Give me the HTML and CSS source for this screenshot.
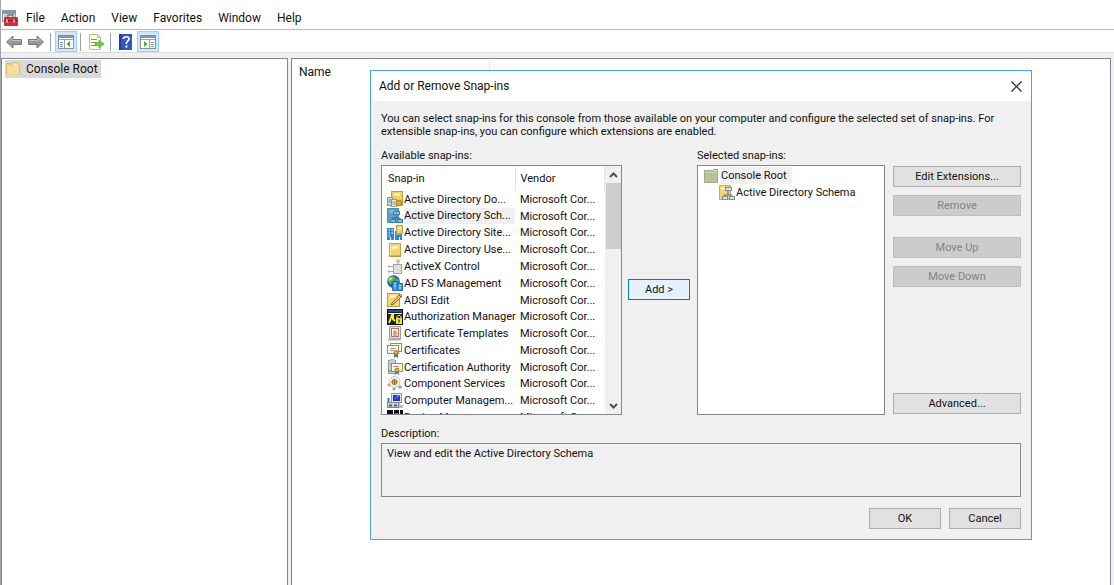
FILE: index.html
```html
<!DOCTYPE html>
<html lang="en">
<head>
    <meta charset="UTF-8">
    <meta name="viewport" content="width=device-width, initial-scale=1.0">
    <title>Console Root</title>
    <link rel="stylesheet" href="styles.css">
</head>
<body>
    <div class="console">
        <nav class="menubar">
            <svg class="icon" viewBox="0 0 16 16">
                <rect x="0.5" y="0.5" width="13" height="11" fill="#e4e8ee" stroke="#8b95a5"/>
                <rect x="1" y="1" width="12" height="3" fill="#8797b0"/>
                <path d="M2 6h4M2 8h3" stroke="#9aa5b5"/>
                <path d="M6 7V5h5v2" fill="none" stroke="#777" stroke-width="1.4"/>
                <rect x="2" y="7" width="14" height="9" rx="1" fill="#cf3035"/>
                <path d="M2 10.5h14" stroke="#8d1a1e"/>
                <path d="M5 9.500v3M12 9.500v3" stroke="#f3c7c7" stroke-width="1.5"/>
            </svg>
            <button class="menu">File</button>
            <button class="menu">Action</button>
            <button class="menu">View</button>
            <button class="menu">Favorites</button>
            <button class="menu">Window</button>
            <button class="menu">Help</button>
        </nav>

        <div class="toolbar">
            <button class="tool" aria-label="Back">
                <svg class="icon" viewBox="0 0 16 16"><path d="M.5 8l6.500-6v3.500h8.500v5H7V14z" fill="#999" stroke="#777"/><path d="M3 7.500l3-3v2h8.500" fill="none" stroke="#c4c4c4"/></svg>
            </button>
            <button class="tool" aria-label="Forward">
                <svg class="icon" viewBox="0 0 16 16"><path d="M15.500 8L9 2v3.500H.5v5H9V14z" fill="#999" stroke="#777"/><path d="M13 7.500l-3-3v2H1.500" fill="none" stroke="#c4c4c4"/></svg>
            </button>
            <span class="separator"></span>
            <button class="tool active" aria-label="Show console tree">
                <svg class="icon" viewBox="0 0 16 16">
                    <rect x="0.5" y="1.5" width="15" height="13" fill="#fff" stroke="#8b9199"/>
                    <path d="M1 3h14" stroke="#8b95a2" stroke-width="2"/>
                    <path d="M1 5.500h14M6.500 6v8" stroke="#9aa0a8"/>
                    <path d="M2 8.500h3M2 10.500h3M2 12.500h3" stroke="#7b98bd"/>
                    <path d="M12 7v6L8.500 10z" fill="#3db51c"/>
                </svg>
            </button>
            <span class="separator"></span>
            <button class="tool" aria-label="Export list">
                <svg class="icon" viewBox="0 0 16 16">
                    <path d="M1.500.5h8l3 3v12h-11z" fill="#fffbe0" stroke="#bdb9a0"/>
                    <path d="M9.500.5v3h3" fill="none" stroke="#bdb9a0"/>
                    <path d="M3 5.500h6M3 8.500h5M3 11.500h6" stroke="#8f8d82"/>
                    <path d="M7 8.500h4V6l5 4-5 4v-2.500H7z" fill="#5fd442" stroke="#48ad30" stroke-width=".6"/>
                </svg>
            </button>
            <span class="separator"></span>
            <button class="tool" aria-label="Help">
                <svg class="icon" viewBox="0 0 16 16">
                    <rect x="1" y="0" width="13" height="16" fill="#3157bd"/>
                    <path d="M2 0v16" stroke="#1f3c92" stroke-width="2"/>
                    <path d="M5.500 5c0-3 5.500-3 5.500 0 0 2-2.700 2-2.700 5" fill="none" stroke="#fff" stroke-width="1.700"/>
                    <rect x="7.400" y="11.500" width="2" height="2" fill="#fff"/>
                </svg>
            </button>
            <button class="tool active" aria-label="Show action pane">
                <svg class="icon" viewBox="0 0 16 16">
                    <rect x="0.5" y="1.5" width="15" height="13" fill="#fff" stroke="#8b9199"/>
                    <path d="M1 3h14" stroke="#8b95a2" stroke-width="2"/>
                    <path d="M1 5.500h14M9.500 6v8" stroke="#9aa0a8"/>
                    <path d="M11 8.500h3M11 10.500h3M11 12.500h3" stroke="#7b98bd"/>
                    <path d="M4 7v6l3.500-3z" fill="#3db51c"/>
                </svg>
            </button>
        </div>

        <main class="panes">
            <section class="tree-pane">
                <div class="tree-root">
                    <svg class="icon" viewBox="0 0 16 16">
                        <path d="M1.500 2.500h6l1-1h5v3h1v9h-13z" fill="#f0d07a" stroke="#e0bd66"/>
                        <path d="M9 3.500h4" stroke="#fff6d2" stroke-width="2"/>
                        <path d="M2 5h12v8.500H2z" fill="#f9e09a"/>
                    </svg>
                    <span>Console Root</span>
                </div>
            </section>
            <section class="result-pane">
                <div class="column-name">Name</div>
            </section>
        </main>
    </div>

    <div class="dialog" role="dialog" aria-labelledby="dialogTitle">
        <header class="titlebar">
            <span id="dialogTitle">Add or Remove Snap-ins</span>
            <button class="close" aria-label="Close">
                <svg viewBox="0 0 11 11"><path d="M.5.5l10 10M10.500.5l-10 10" stroke="#222" stroke-width="1.200"/></svg>
            </button>
        </header>

        <div class="dialog-body">
            <p class="intro">You can select snap-ins for this console from those available on your computer and configure the selected set of snap-ins. For extensible snap-ins, you can configure which extensions are enabled.</p>

            <div class="picker">
                <div class="field">
                    <div class="label" id="availableLabel">Available snap-ins:</div>
                    <div class="listbox available">
                        <table class="snapins" aria-labelledby="availableLabel">
                            <thead>
                                <tr><th>Snap-in</th><th>Vendor</th></tr>
                            </thead>
                            <tbody>
                                <tr>
                                    <td><div class="item"><svg class="icon" viewBox="0 0 16 16"><rect x="4.500" y=".5" width="11" height="14" fill="#efd264" stroke="#c09d3c"/><path d="M7 3.500h6" stroke="#fff8ce" stroke-width="2"/><rect x=".5" y="6.500" width="5" height="8" fill="#cdd3d6" stroke="#8d979c"/><rect x="4.500" y="8.500" width="5" height="7" fill="#e3e7e8" stroke="#8d979c"/><path d="M1.500 9h3M1.500 11h3M5.500 11h3M5.500 13h3" stroke="#6fa07c"/><circle cx="12" cy="12" r="2.500" fill="#f6b824" stroke="#c98322" stroke-width="1.500"/></svg><span>Active Directory Do...</span></div></td>
                                    <td>Microsoft Cor...</td>
                                </tr>
                                <tr class="selected">
                                    <td><div class="item"><svg class="icon" viewBox="0 0 16 16"><path d="M.5.5h11v14H.5z" fill="#5aa2c4" stroke="#4a90b3"/><path d="M2 3.500h6" stroke="#8dc3dc" stroke-width="2"/><path d="M9 6v4M5 12v-2h8v2" fill="none" stroke="#2f6f9a"/><rect x="6.500" y="3.500" width="6" height="3" fill="#84bbdd" stroke="#3d80ac"/><rect x="3.500" y="11.500" width="5" height="3" fill="#84bbdd" stroke="#3d80ac"/><rect x="10.500" y="11.500" width="5" height="3" fill="#84bbdd" stroke="#3d80ac"/></svg><span>Active Directory Sch...</span></div></td>
                                    <td>Microsoft Cor...</td>
                                </tr>
                                <tr>
                                    <td><div class="item"><svg class="icon" viewBox="0 0 16 16"><path d="M0 3h7v12H4v-3H3v3H0zM8 6h7v9h-2v-3h-1v3H8z" fill="#2c86d2"/><path d="M1.500 5h1.500M4.500 5H6M1.500 8h1.500M4.500 8H6M9 9h1.500M12 9h1.500M1.500 11h1.500" stroke="#b7e1ff" stroke-width="1.500"/><rect x="9.500" y=".5" width="6" height="8" fill="#f0d468" stroke="#c09d3c"/><path d="M11 3h3" stroke="#fff8ce" stroke-width="1.500"/></svg><span>Active Directory Site...</span></div></td>
                                    <td>Microsoft Cor...</td>
                                </tr>
                                <tr>
                                    <td><div class="item"><svg class="icon" viewBox="0 0 16 16"><rect x="2.500" y="1.500" width="11" height="13" fill="#f2d76e" stroke="#c5a23f"/><path d="M3.500 2v12" stroke="#f9eba6"/><path d="M5 5.500h6" stroke="#fffde5" stroke-width="2"/><path d="M3 14h11" stroke="#b08a2a"/></svg><span>Active Directory Use...</span></div></td>
                                    <td>Microsoft Cor...</td>
                                </tr>
                                <tr>
                                    <td><div class="item"><svg class="icon" viewBox="0 0 16 16"><path d="M1 7.500h6M1 12.500h6M11 5V1" stroke="#a2a2a2"/><circle cx="11" cy="2" r="1.500" fill="#d2d2d2" stroke="#999" stroke-width=".6"/><circle cx="2" cy="7.500" r="1.300" fill="#b5b5b5"/><circle cx="2" cy="12.500" r="1.300" fill="#b5b5b5"/><rect x="6.500" y="5.500" width="8" height="9" fill="#dedede" stroke="#a2a2a2"/></svg><span>ActiveX Control</span></div></td>
                                    <td>Microsoft Cor...</td>
                                </tr>
                                <tr>
                                    <td><div class="item"><svg class="icon" viewBox="0 0 16 16"><circle cx="6.500" cy="6.500" r="6.300" fill="#1654b5"/><path d="M2 2l4-1 3 2-2 3-2 1-1 3-3-3zM9 3l3 2-1 3-3-1z" fill="#5bb44d"/><path d="M1 5l3-3 2 1-3 3z" fill="#f1d43f"/><path d="M5.500 6.500h5v9h-5zM10.500 8.500h5v7h-5z" fill="#3f9be2" stroke="#2468ae"/><path d="M7 8.500h2M7 11h2M12 10.500h2M12 13h2" stroke="#ccecff"/></svg><span>AD FS Management</span></div></td>
                                    <td>Microsoft Cor...</td>
                                </tr>
                                <tr>
                                    <td><div class="item"><svg class="icon" viewBox="0 0 16 16"><rect x=".5" y="1.500" width="12" height="13" fill="#f2da78" stroke="#bd9a40"/><path d="M3 4.500h6" stroke="#fff9d4" stroke-width="2"/><path d="M5 11l8-9 2 2-8 8-3 1z" fill="#f2bf79" stroke="#7e4b2b" stroke-width=".8"/><path d="M12 3l2 2" stroke="#c44239"/></svg><span>ADSI Edit</span></div></td>
                                    <td>Microsoft Cor...</td>
                                </tr>
                                <tr>
                                    <td><div class="item"><svg class="icon" viewBox="0 0 16 16"><rect x=".5" y=".5" width="15" height="15" fill="#222" stroke="#111"/><path d="M1 2h14" stroke="#234ba6" stroke-width="2"/><path d="M1 4.500h14" stroke="#eee"/><path d="M2 14l3-8h1v4l2 2" fill="none" stroke="#f3ec38" stroke-width="2"/><path d="M10 10V8c0-2 4-2 4 0v2" fill="none" stroke="#fff"/><rect x="9" y="9" width="6" height="6" fill="#eee13d"/><path d="M12 10.500v3" stroke="#111"/></svg><span>Authorization Manager</span></div></td>
                                    <td>Microsoft Cor...</td>
                                </tr>
                                <tr>
                                    <td><div class="item"><svg class="icon" viewBox="0 0 16 16"><path d="M2.500.5h11v12h-11z" fill="#dde4ee" stroke="#959ba8"/><path d="M1 13.500h13" stroke="#b0b0b8" stroke-width="2"/><rect x="4.500" y="2.500" width="7" height="8" fill="#fffdf2" stroke="#b1715d"/><circle cx="8" cy="6" r="1.800" fill="#e89b29"/><path d="M7 7v3M9 7v3" stroke="#b85b26"/></svg><span>Certificate Templates</span></div></td>
                                    <td>Microsoft Cor...</td>
                                </tr>
                                <tr>
                                    <td><div class="item"><svg class="icon" viewBox="0 0 16 16"><rect x="3.500" y="1.500" width="11" height="8" fill="#fff8df" stroke="#a58a54"/><rect x=".5" y="3.500" width="11" height="8" fill="#fffef5" stroke="#a58a54"/><path d="M3 6.500h6M3 8.500h4" stroke="#9796a3"/><path d="M7 11v5l2-1.500 2 1.500v-5z" fill="#3979cf"/><circle cx="9" cy="10.500" r="2" fill="#f0ae2c" stroke="#bd741d"/></svg><span>Certificates</span></div></td>
                                    <td>Microsoft Cor...</td>
                                </tr>
                                <tr>
                                    <td><div class="item"><svg class="icon" viewBox="0 0 16 16"><path d="M1.500 1.500l4-1 3 1v13h-7z" fill="#cdd3d5" stroke="#8d989d"/><path d="M3 4.500h4M3 6.500h4" stroke="#8aa0a9"/><circle cx="3" cy="12" r="1" fill="#45bf4a"/><rect x="4.500" y="4.500" width="11" height="8" fill="#fff8db" stroke="#a58a54"/><path d="M6 7.500h6" stroke="#9490a0"/><path d="M8 12v4l2-1.500 2 1.500v-4z" fill="#3979cf"/><circle cx="10" cy="11" r="2" fill="#f0ae2c" stroke="#bd741d"/></svg><span>Certification Authority</span></div></td>
                                    <td>Microsoft Cor...</td>
                                </tr>
                                <tr>
                                    <td><div class="item"><svg class="icon" viewBox="0 0 16 16"><circle cx="7.500" cy="6" r="5.500" fill="#ececf0" stroke="#c8c8d0"/><circle cx="7.500" cy="6" r="2.500" fill="#ffd642" stroke="#9c7015"/><path d="M7.500 3v6M4.500 6h6" stroke="#9c7015"/><circle cx="2" cy="9" r="1.500" fill="#d8968f"/><circle cx="7" cy="13" r="1.500" fill="#6dc07e"/><circle cx="13" cy="11" r="1.800" fill="#7faae0"/></svg><span>Component Services</span></div></td>
                                    <td>Microsoft Cor...</td>
                                </tr>
                                <tr>
                                    <td><div class="item"><svg class="icon" viewBox="0 0 16 16"><rect x="4.500" y=".5" width="10" height="9" fill="#dfe2e8" stroke="#999"/><rect x="6" y="2" width="7" height="6" fill="#203bcf"/><path d="M7 7l4-5h2z" fill="#7dadf5"/><path d="M7 10h6v2h3v3H4z" fill="#bbc0c5"/><path d="M1.500 5v4" stroke="#2e81d1" stroke-width="2"/><rect x=".5" y="9.500" width="11" height="5" fill="#c9d2d4" stroke="#7d888c"/><path d="M2 12.500h3M7 12.500h3" stroke="#50656c" stroke-width="2"/></svg><span>Computer Managem...</span></div></td>
                                    <td>Microsoft Cor...</td>
                                </tr>
                                <tr>
                                    <td><div class="item"><svg class="icon" viewBox="0 0 16 16"><path d="M0 0h6v6H0zM7 0h5v6H7zM13 0h3v6h-3zM0 8h16v7H0z" fill="#111"/><path d="M8 3.500h3" stroke="#39a356"/></svg><span>Device Manager</span></div></td>
                                    <td>Microsoft Cor...</td>
                                </tr>
                            </tbody>
                        </table>
                        <div class="scrollbar" aria-hidden="true">
                            <svg viewBox="0 0 17 17"><path d="M5 11l3.500-3.500L12 11" fill="none" stroke="#505050" stroke-width="2"/></svg>
                            <div class="thumb"></div>
                            <svg viewBox="0 0 17 17"><path d="M5 7l3.500 3.500L12 7" fill="none" stroke="#505050" stroke-width="2"/></svg>
                        </div>
                    </div>
                </div>

                <button class="btn add">Add &gt;</button>

                <div class="field">
                    <div class="label">Selected snap-ins:</div>
                    <div class="listbox chosen">
                        <ul class="tree">
                            <li class="item root"><svg class="icon" viewBox="0 0 16 16"><path d="M.5 2.500h8l1-1h4v13H.5z" fill="#b7c39b" stroke="#9fad86"/><path d="M10 2.500h3" stroke="#b5e3f0"/><path d="M1 4.500h12" stroke="#cbd5b1"/></svg><span>Console Root</span></li>
                            <li class="item child"><svg class="icon" viewBox="0 0 16 16"><path d="M.5.5h11v14H.5z" fill="#efd670" stroke="#c9ab4a"/><path d="M2 3.500h6" stroke="#fffad2" stroke-width="2"/><path d="M9 6v4M5 12v-2h8v2" fill="none" stroke="#69747d"/><rect x="6.500" y="2.500" width="6" height="3" fill="#dce3e8" stroke="#7f8b94"/><rect x="3.500" y="11.500" width="5" height="3" fill="#dce3e8" stroke="#7f8b94"/><rect x="10.500" y="11.500" width="5" height="3" fill="#dce3e8" stroke="#7f8b94"/></svg><span>Active Directory Schema</span></li>
                        </ul>
                    </div>
                </div>

                <div class="actions">
                    <button class="btn">Edit Extensions...</button>
                    <button class="btn" disabled>Remove</button>
                    <button class="btn move-up" disabled>Move Up</button>
                    <button class="btn" disabled>Move Down</button>
                    <button class="btn advanced">Advanced...</button>
                </div>
            </div>

            <label class="label" for="description">Description:</label>
            <textarea class="description" id="description" readonly>View and edit the Active Directory Schema</textarea>

            <footer class="footer">
                <button class="btn">OK</button>
                <button class="btn">Cancel</button>
            </footer>
        </div>
    </div>
</body>
</html>
```

FILE: styles.css
```css
* {
    box-sizing: border-box;
}

body {
    margin: 0;
    color: #111;
    font-family: Roboto, 'Open Sans', sans-serif;
    font-size: 12px;
    line-height: 16px;
}

button,
textarea {
    margin: 0;
    color: inherit;
    font: inherit;
}

.icon {
    width: 16px;
    height: 16px;
    flex: none;
    display: block;
}

/* main window */

.console {
    display: flex;
    flex-direction: column;
    height: 100vh;
    background: #f0f0f0;
    border-left: 1px solid #a0a3a8;
    overflow: hidden;
}

.menubar {
    display: flex;
    align-items: center;
    padding: 7px 1px 0;
    height: 30px;
    background: #fff;
    border-bottom: 1px solid #b4b9b9;
}

.menu {
    padding: 0 8px;
    border: none;
    background: none;
}

.toolbar {
    display: flex;
    align-items: center;
    height: 23px;
    padding: 1px 0 0 2px;
    background: #fff;
    border-bottom: 1px solid #dcdcdc;
}

.tool {
    display: flex;
    align-items: center;
    justify-content: center;
    width: 22px;
    height: 21px;
    padding: 0;
    border: 1px solid transparent;
    background: none;
}

.tool.active {
    background: #cce8ff;
    border-color: #99d1ff;
}

.separator {
    width: 1px;
    height: 18px;
    margin: 0 4px 0 3px;
    background: #a0a0a0;
}

.panes {
    display: flex;
    flex: 1;
    gap: 3px;
    padding: 5px 3px 0 0;
}

.tree-pane,
.result-pane {
    background: #fff;
    border: 1px solid #828790;
    border-bottom: none;
}

.tree-pane {
    flex: 0 0 287px;
    padding: 1px 3px;
}

.result-pane {
    flex: 1;
    padding: 2px 0;
}

.tree-root {
    display: flex;
    align-items: center;
    gap: 5px;
    width: fit-content;
    height: 18px;
    padding-right: 3px;
    background: #d9d9d9;
}

.column-name {
    width: 198px;
    height: 24px;
    padding: 3px 7px;
    border-right: 1px solid #e5e5e5;
}

/* dialog window */

.dialog {
    position: absolute;
    top: 70px;
    left: 370px;
    width: 662px;
    background: #f0f0f0;
    border: 1px solid #4a9fe3;
}

.titlebar {
    display: flex;
    align-items: center;
    justify-content: space-between;
    height: 30px;
    padding: 0 9px 0 8px;
    background: #fff;
}

.close {
    padding: 0;
    border: none;
    background: none;
}

.close svg {
    display: block;
    width: 11px;
    height: 11px;
}

.dialog-body {
    padding: 11px 10px 10px;
    font-size: 11px;
    line-height: 13px;
}

.intro {
    margin: 0 0 11px;
    padding-right: 20px;
}

.label {
    display: block;
    height: 16px;
}

.picker {
    display: flex;
    margin-bottom: 12px;
}

.listbox {
    display: flex;
    height: 250px;
    background: #fff;
    border: 1px solid #828790;
    overflow: hidden;
}

.available {
    width: 241px;
}

.chosen {
    width: 188px;
}

.snapins {
    width: 222px;
    height: 260px;
    table-layout: fixed;
    border-collapse: collapse;
    white-space: nowrap;
}

.snapins th {
    width: 89px;
    height: 25px;
    padding: 0 5px;
    border-right: 1px solid #e5e5e5;
    font-weight: normal;
    text-align: left;
}

.snapins th:first-child {
    width: 133px;
    padding-left: 6px;
}

.snapins td {
    padding: 0 5px;
}

.snapins td:first-child {
    padding-right: 0;
}

.item {
    display: flex;
    align-items: center;
    gap: 1px;
}

.selected span {
    flex: 1;
    background: #f0f0f0;
    line-height: 16px;
}

.scrollbar {
    flex: none;
    display: flex;
    flex-direction: column;
    width: 17px;
    background: #f0f0f0;
}

.scrollbar svg {
    width: 17px;
    height: 17px;
}

.thumb {
    height: 66px;
    margin: 0 1px auto;
    background: #cdcdcd;
}

.tree {
    margin: 0;
    padding: 1px 6px;
    list-style: none;
    line-height: 17px;
}

.root span {
    padding-right: 5px;
    background: #f0f0f0;
}

.child {
    padding-left: 15px;
}

.btn {
    height: 21px;
    padding: 0;
    background: #e1e1e1;
    border: 1px solid #adadad;
}

.btn:disabled {
    background: #cccccc;
    border-color: #bfbfbf;
    color: #838383;
}

.add {
    align-self: center;
    width: 62px;
    margin: 14px 7px 0 6px;
    background: #e5f1fb;
    border-color: #0078d7;
}

.actions {
    display: flex;
    flex: 1;
    flex-direction: column;
    gap: 8px;
    padding: 17px 0 1px;
    margin-left: 8px;
}

.move-up {
    margin-top: 13px;
}

.advanced {
    margin-top: auto;
}

.description {
    display: block;
    width: 100%;
    height: 54px;
    padding: 3px 5px;
    background: #f0f0f0;
    border: 1px solid #828790;
    resize: none;
}

.footer {
    display: flex;
    justify-content: flex-end;
    gap: 8px;
    margin-top: 11px;
}

.footer .btn {
    width: 72px;
}
```
